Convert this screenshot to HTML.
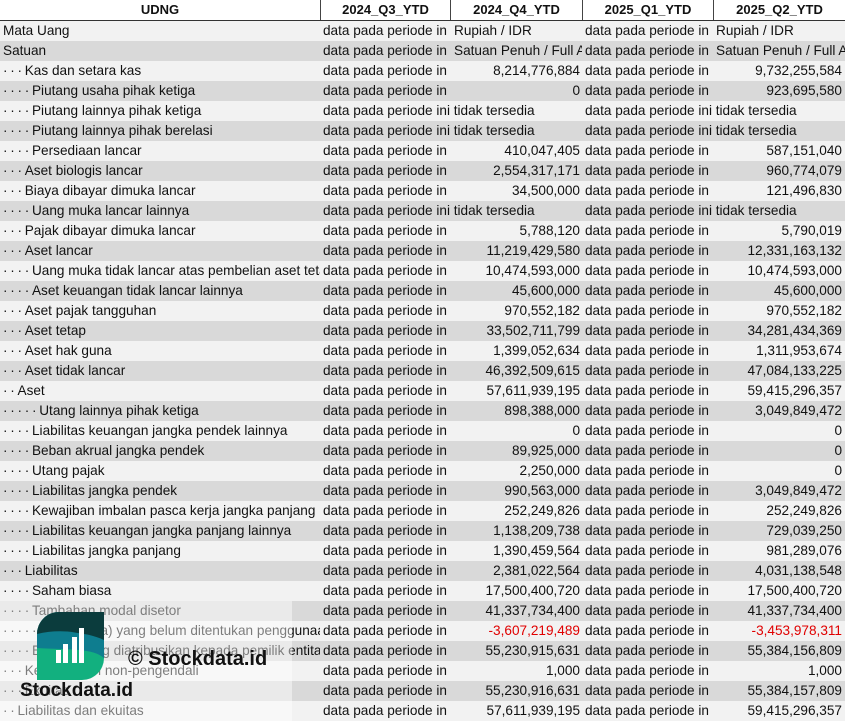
<!DOCTYPE html>
<html><head><meta charset="utf-8"><style>
html,body{margin:0;padding:0;}
body{width:845px;height:721px;overflow:hidden;position:relative;background:#fff;font-family:"Liberation Sans",Arial,sans-serif;font-size:13.6px;color:#111;}
.hd{position:absolute;left:0;top:0;width:845px;height:20px;background:#fff;border-bottom:1px solid #333;font-weight:bold;font-size:13px;}
.hd div{position:absolute;top:0;height:20px;line-height:20px;text-align:center;border-right:1px solid #444;box-sizing:border-box;}
.r{position:absolute;left:0;width:845px;height:20px;line-height:20px;white-space:nowrap;}
.r.l{background:#f2f2f2}.r.d{background:#d9d9d9}
.c{position:absolute;top:0;height:20px;overflow:hidden;}
.n{text-align:right}
.red{color:#e00000}
.wm{position:absolute;left:0;top:601px;width:292px;height:120px;background:rgba(255,255,255,0.45);}
</style></head><body>
<div class="hd">
<div style="left:0;width:321px">UDNG</div>
<div style="left:321px;width:130px">2024_Q3_YTD</div>
<div style="left:451px;width:132px">2024_Q4_YTD</div>
<div style="left:583px;width:131px">2025_Q1_YTD</div>
<div style="left:714px;width:131px;border-right:none">2025_Q2_YTD</div>
</div>
<div id="rows"></div>
<div class="wm"></div>
<svg style="position:absolute;left:37px;top:612px" width="67" height="68" viewBox="0 0 67 68">
<defs><clipPath id="lg"><path d="M22 0H67V46A22 22 0 0 1 45 68H0V22A22 22 0 0 1 22 0Z"/></clipPath></defs>
<g clip-path="url(#lg)">
<rect width="67" height="68" fill="#12b07f"/>
<path d="M0 0H67V40C55 38 45 38 0 33Z" fill="#0e7d8f"/>
<path d="M0 0H67V28C45 18 25 20 0 26Z" fill="#0b3c3d"/>
<path d="M0 22C25 16 50 20 67 32V46C55 36 35 38 0 36Z" fill="#0e7d8f"/>
</g>
<rect x="19" y="38" width="5" height="13" fill="#fff"/>
<rect x="26" y="32" width="5" height="19" fill="#fff"/>
<rect x="35" y="25" width="5" height="26" fill="#fff"/>
<rect x="42" y="16" width="5" height="35" fill="#fff"/>
</svg>
<div style="position:absolute;left:128px;top:648px;font-weight:bold;font-size:20px;color:#111;">© Stockdata.id</div>
<div style="position:absolute;left:20px;top:680px;font-weight:bold;font-size:19px;color:#111;">Stockdata.id</div>
<script>
var D="data pada periode in",NA="data pada periode ini tidak tersedia";
var rows=[
["Mata Uang",0,D,"Rupiah / IDR",D,"Rupiah / IDR"],
["Satuan",0,D,"Satuan Penuh / Full Amount",D,"Satuan Penuh / Full Amount"],
["Kas dan setara kas",3,D,"8,214,776,884",D,"9,732,255,584"],
["Piutang usaha pihak ketiga",4,D,"0",D,"923,695,580"],
["Piutang lainnya pihak ketiga",4,NA,null,NA,null],
["Piutang lainnya pihak berelasi",4,NA,null,NA,null],
["Persediaan lancar",4,D,"410,047,405",D,"587,151,040"],
["Aset biologis lancar",3,D,"2,554,317,171",D,"960,774,079"],
["Biaya dibayar dimuka lancar",3,D,"34,500,000",D,"121,496,830"],
["Uang muka lancar lainnya",4,NA,null,NA,null],
["Pajak dibayar dimuka lancar",3,D,"5,788,120",D,"5,790,019"],
["Aset lancar",3,D,"11,219,429,580",D,"12,331,163,132"],
["Uang muka tidak lancar atas pembelian aset tetap",4,D,"10,474,593,000",D,"10,474,593,000"],
["Aset keuangan tidak lancar lainnya",4,D,"45,600,000",D,"45,600,000"],
["Aset pajak tangguhan",3,D,"970,552,182",D,"970,552,182"],
["Aset tetap",3,D,"33,502,711,799",D,"34,281,434,369"],
["Aset hak guna",3,D,"1,399,052,634",D,"1,311,953,674"],
["Aset tidak lancar",3,D,"46,392,509,615",D,"47,084,133,225"],
["Aset",2,D,"57,611,939,195",D,"59,415,296,357"],
["Utang lainnya pihak ketiga",5,D,"898,388,000",D,"3,049,849,472"],
["Liabilitas keuangan jangka pendek lainnya",4,D,"0",D,"0"],
["Beban akrual jangka pendek",4,D,"89,925,000",D,"0"],
["Utang pajak",4,D,"2,250,000",D,"0"],
["Liabilitas jangka pendek",4,D,"990,563,000",D,"3,049,849,472"],
["Kewajiban imbalan pasca kerja jangka panjang",4,D,"252,249,826",D,"252,249,826"],
["Liabilitas keuangan jangka panjang lainnya",4,D,"1,138,209,738",D,"729,039,250"],
["Liabilitas jangka panjang",4,D,"1,390,459,564",D,"981,289,076"],
["Liabilitas",3,D,"2,381,022,564",D,"4,031,138,548"],
["Saham biasa",4,D,"17,500,400,720",D,"17,500,400,720"],
["Tambahan modal disetor",4,D,"41,337,734,400",D,"41,337,734,400"],
["(Saldo laba) yang belum ditentukan penggunaannya",5,D,"-3,607,219,489",D,"-3,453,978,311",1],
["Ekuitas yang diatribusikan kepada pemilik entitas induk",4,D,"55,230,915,631",D,"55,384,156,809"],
["Kepentingan non-pengendali",3,D,"1,000",D,"1,000"],
["Ekuitas",3,D,"55,230,916,631",D,"55,384,157,809"],
["Liabilitas dan ekuitas",2,D,"57,611,939,195",D,"59,415,296,357"]
];
var h="";
rows.forEach(function(r,i){
var y=21+i*20,cls=i%2==0?"l":"d";
var dots="";for(var k=0;k<r[1];k++)dots+="·\u2009";
var num=i>=2;
h+='<div class="r '+cls+'" style="top:'+y+'px">';
h+='<div class="c" style="left:3px;width:317px">'+dots+r[0]+'</div>';
if(r[3]===null){
h+='<div class="c" style="left:323px;width:259px">'+r[2]+'</div>';
h+='<div class="c" style="left:585px;width:260px">'+r[4]+'</div>';
}else{
var rc=r[6]?' red':'';
h+='<div class="c" style="left:323px;width:127px">'+r[2]+'</div>';
h+='<div class="c'+(num?' n':'')+rc+'" style="left:'+(num?451:454)+'px;width:'+(num?129:128)+'px">'+r[3]+'</div>';
h+='<div class="c" style="left:585px;width:128px">'+r[4]+'</div>';
h+='<div class="c'+(num?' n':'')+rc+'" style="left:'+(num?714:716)+'px;width:'+(num?128:129)+'px">'+r[5]+'</div>';
}
h+='</div>';
});
document.getElementById("rows").innerHTML=h;
</script>
</body></html>
